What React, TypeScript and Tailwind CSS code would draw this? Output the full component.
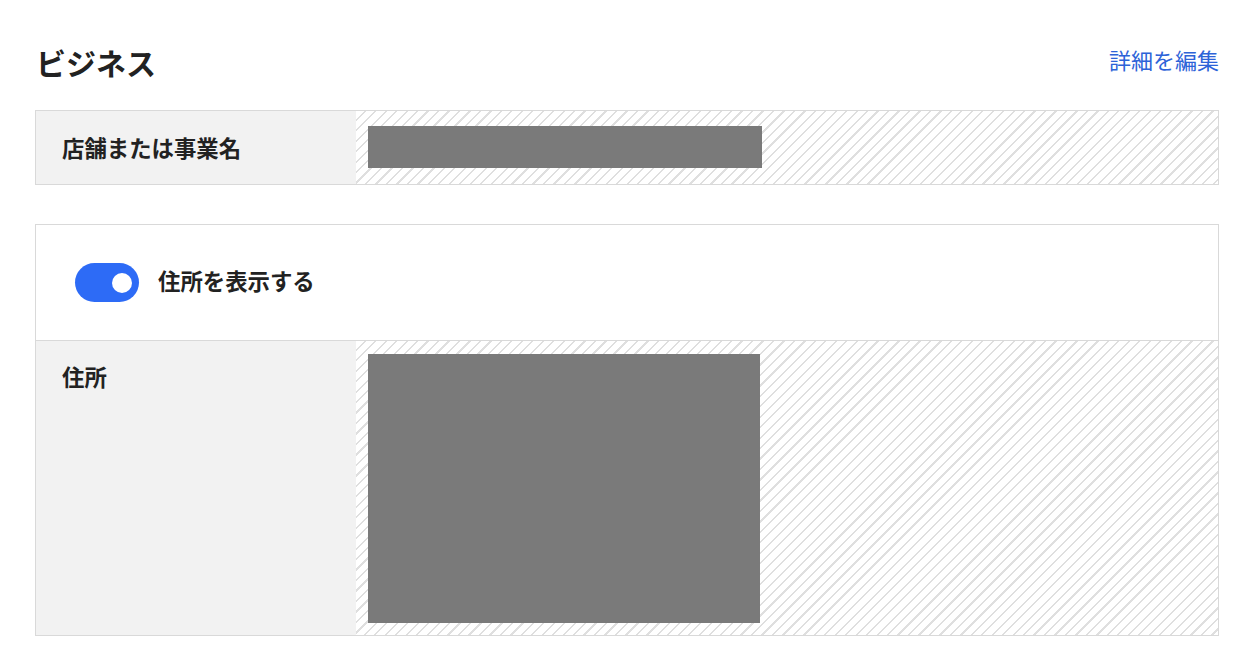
import React from "react";

const hatch =
  "bg-[repeating-linear-gradient(135deg,#ffffff_0px,#ffffff_5.8px,#dfdfdf_5.8px,#dfdfdf_7.4px)]";

export default function App() {
  return (
    <div
      className="min-h-[662px] bg-white pl-[35px] pr-[33px] pt-[40px] text-[#222222]"
      style={{ fontFamily: '"Noto Sans CJK JP", "Noto Sans", sans-serif' }}
    >
      <div className="flex h-[44px] items-center justify-between">
        <h1 className="pl-[1px] text-[30px] font-bold leading-none">ビジネス</h1>
        <a className="mb-[7px] text-[22px] leading-none text-[#2d63d8]">詳細を編集</a>
      </div>

      <div className="mt-[26px] flex border border-[#d9d9d9]">
        <div className="flex h-[73px] w-[320px] shrink-0 items-center bg-[#f2f2f2] pl-[26px] text-[22.4px] font-bold">
          店舗または事業名
        </div>
        <div className={`flex flex-1 items-center pl-[12px] ${hatch}`}>
          <div className="mb-[1px] h-[42px] w-[394px] bg-[#7a7a7a]" />
        </div>
      </div>

      <div className="mt-[39px] border border-[#d9d9d9]">
        <div className="flex h-[116px] items-center gap-[19px] border-b border-[#d9d9d9] pl-[39px]">
          <div className="relative h-[39px] w-[64px] rounded-full bg-[#2d6bf6]">
            <div className="absolute right-[7px] top-[9.5px] h-[20px] w-[20px] rounded-full bg-white" />
          </div>
          <span className="mb-[3px] text-[22.4px] font-bold">住所を表示する</span>
        </div>
        <div className="flex h-[294px]">
          <div className="w-[320px] shrink-0 bg-[#f2f2f2] pl-[26px] pt-[19px] text-[22.4px] font-bold leading-[32px]">
            住所
          </div>
          <div className={`flex-1 pl-[12px] pt-[13px] ${hatch}`}>
            <div className="h-[269px] w-[392px] bg-[#7a7a7a]" />
          </div>
        </div>
      </div>
    </div>
  );
}
